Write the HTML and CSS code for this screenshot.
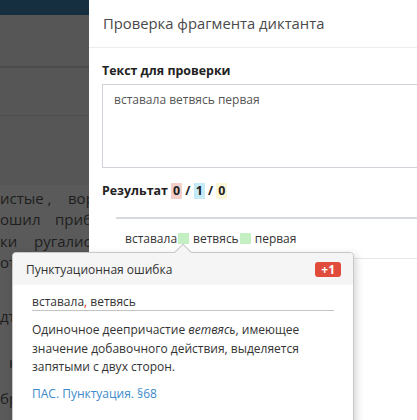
FILE: index.html
```html
<!DOCTYPE html>
<html lang="ru">
<head>
<meta charset="utf-8">
<title>Проверка фрагмента диктанта</title>
<link rel="stylesheet" href="styles.css">
</head>
<body>
<div class="page">
  <div class="backdrop">
    <div class="bd-nav"></div>
    <div class="bd-band bd-band-a"></div>
    <div class="bd-band bd-band-b"></div>
    <div class="bd-band bd-band-c"></div>
    <div class="bd-text">
      <div class="bd-line"><span class="bw l1a">истые ,</span><span>вор</span></div>
      <div class="bd-line"><span class="bw l2a">ошил</span><span>прибр</span></div>
      <div class="bd-line"><span class="bw l3a">ки</span><span>ругались</span></div>
      <div class="bd-line"><span>от</span></div>
      <div class="bd-line gap1"><span>дт</span></div>
      <div class="bd-line gap2"><span class="ind9">н</span></div>
      <div class="bd-line gap3"><span>бр</span></div>
    </div>
  </div>
  <div class="panel">
    <div class="panel-head">Проверка фрагмента диктанта</div>
    <div class="panel-body">
      <div class="label">Текст для проверки</div>
      <div class="textarea">вставала ветвясь первая</div>
      <div class="label result-label">Результат <span class="cnt cnt-red">0</span> / <span class="cnt cnt-blue">1</span> / <span class="cnt cnt-yellow">0</span></div>
      <div class="result-box">
        <span class="rw">вставала</span><span class="mark"></span><span class="rw">ветвясь</span><span class="mark"></span><span class="rw">первая</span>
      </div>
    </div>
  </div>
</div>

<div class="popover">
  <div class="arrow"></div>
  <div class="pop-head">
    <span>Пунктуационная ошибка</span>
    <span class="badge">+1</span>
  </div>
  <div class="pop-body">
    <div class="fix">вставала<span class="comma">,</span> ветвясь</div>
    <p class="rule">Одиночное деепричастие <em>ветвясь</em>, имеющее значение добавочного действия, выделяется запятыми с двух сторон.</p>
    <a class="ref" href="#">ПАС. Пунктуация. §68</a>
  </div>
</div>
</body>
</html>
```

FILE: styles.css
```css
html, body {
  margin: 0;
  padding: 0;
}
body {
  width: 417px;
  height: 420px;
  overflow: hidden;
  position: relative;
  font-family: "Open Sans", "Noto Sans", sans-serif;
  background: #fff;
}
.page {
  display: flex;
  height: 420px;
}
.backdrop {
  width: 89px;
  flex: none;
  display: flex;
  flex-direction: column;
  background: #565656;
  overflow: hidden;
}
.bd-nav {
  height: 15px;
  background: #162f40;
}
.bd-band {
  background: #565656;
}
.bd-band-a {
  height: 51px;
  border-bottom: 2px solid #4b4b4b;
}
.bd-band-b {
  height: 47px;
  border-bottom: 1px solid #4e4e4e;
}
.bd-band-c {
  height: 69px;
}
.bd-text {
  flex: 1;
  background: #5a5a5a;
  padding-top: 3px;
  color: #1e1e1e;
  font-size: 15px;
  white-space: nowrap;
}
.bd-line {
  height: 21.3px;
  line-height: 21.3px;
  display: flex;
}
.bw {
  display: inline-block;
  flex: none;
  overflow: hidden;
}
.l1a { width: 68px; }
.l2a { width: 55px; }
.l3a { width: 34px; }
.ind9 { margin-left: 9px; }
.gap1 { margin-top: 33px; }
.gap2 { margin-top: 25px; }
.gap3 { margin-top: 14px; }

.panel {
  flex: 1;
  min-width: 0;
  background: #fff;
  overflow: hidden;
}
.panel-head {
  height: 47px;
  line-height: 46px;
  border-bottom: 1px solid #ececec;
  padding-left: 14px;
  font-size: 14.8px;
  color: #4a4a4a;
  white-space: nowrap;
}
.panel-body {
  padding: 14px 0 0 13px;
}
.label {
  font-size: 12.4px;
  font-weight: 700;
  line-height: 18px;
  color: #222;
  white-space: nowrap;
}
.textarea {
  margin-top: 4px;
  width: 420px;
  height: 70px;
  border: 1px solid #d0d4da;
  padding: 6px 11px;
  font-size: 12px;
  line-height: 18px;
  color: #555;
  white-space: nowrap;
}
.result-label {
  margin-top: 14px;
}
.cnt {
  display: inline-block;
  padding: 0 2px;
  line-height: 16px;
}
.cnt-red { background: #f3d0ca; }
.cnt-blue { background: #c4ebf7; }
.cnt-yellow { background: #fcf5d6; }

.result-box {
  margin-top: 17px;
  margin-left: 14px;
  width: 400px;
  height: 39px;
  border-top: 2px solid #d6d9de;
  border-bottom: 1px solid #e6e6e6;
  padding-left: 9px;
  display: flex;
  align-items: center;
  font-size: 12px;
  color: #333;
  white-space: nowrap;
}
.mark {
  display: inline-block;
  width: 11px;
  height: 11px;
  background: #c3efc3;
  margin: 0 4px 0 1px;
}

.popover {
  position: absolute;
  left: 12px;
  top: 252px;
  width: 340px;
  height: 190px;
  background: #fff;
  border: 1px solid #c8c8c8;
  border-radius: 4px;
  box-shadow: 2px 3px 8px rgba(0, 0, 0, 0.18);
}
.arrow {
  position: absolute;
  left: 164px;
  top: -7px;
  width: 11px;
  height: 11px;
  background: #f5f5f5;
  border-left: 1px solid #c8c8c8;
  border-top: 1px solid #c8c8c8;
  transform: rotate(45deg);
}
.pop-head {
  position: relative;
  height: 32px;
  background: #f5f5f5;
  border-radius: 4px 4px 0 0;
  display: flex;
  align-items: center;
  justify-content: space-between;
  padding: 0 12px 0 13px;
  font-size: 12px;
  color: #333;
}
.badge {
  background: #e04b3b;
  color: #fff;
  font-weight: 700;
  font-size: 12px;
  line-height: 15px;
  height: 15px;
  padding: 0 6px;
  border-radius: 3px;
}
.pop-body {
  padding: 8px 19px 0 19px;
  font-size: 12px;
  color: #333;
}
.fix {
  line-height: 17px;
  border-bottom: 1px solid #c4c4c4;
}
.comma {
  color: #e02020;
}
.rule {
  margin: 10px 0 0 0;
  line-height: 18.5px;
}
.ref {
  display: block;
  margin-top: 8px;
  line-height: 18px;
  color: #3d8bcb;
  text-decoration: none;
}
```
